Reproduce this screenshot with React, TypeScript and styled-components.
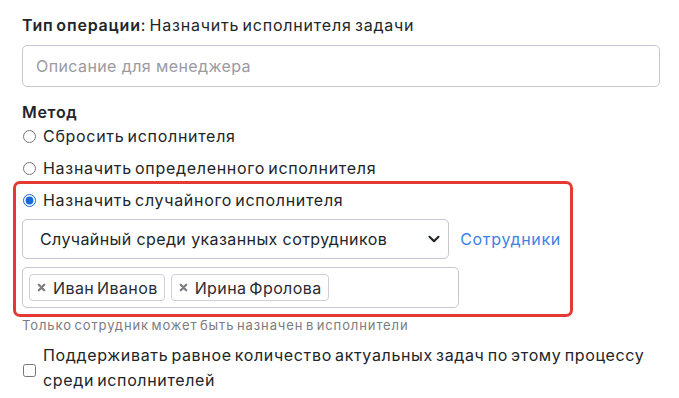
import React from "react";
import styled, { createGlobalStyle } from "styled-components";

const GlobalStyle = createGlobalStyle`
  body {
    margin: 0;
    background: #fff;
    font-family: Inter, "Noto Sans", sans-serif;
    color: #212529;
    letter-spacing: 0.7px;
    word-spacing: -2px;
  }
`;

const Page = styled.div`
  width: 679px;
  box-sizing: border-box;
  padding: 13px 19px 0 22px;
`;

const TypeLine = styled.div`
  font-size: 16px;
  line-height: 24px;
  letter-spacing: 0.8px;
  b {
    font-weight: 600;
  }
`;

const TextInput = styled.input`
  display: block;
  box-sizing: border-box;
  width: 100%;
  height: 42px;
  margin-top: 8px;
  padding: 0 13px;
  border: 1px solid #c6c6d2;
  border-radius: 5px;
  font: inherit;
  font-size: 16px;
  letter-spacing: 0.4px;
  color: #212529;
  &::placeholder {
    color: #9a9aa2;
  }
`;

const SectionTitle = styled.div`
  margin-top: 13px;
  font-size: 16px;
  line-height: 24px;
  font-weight: 600;
`;

const RadioRow = styled.label<{ $gap?: number }>`
  display: flex;
  align-items: center;
  gap: 7px;
  height: 24px;
  margin-top: ${(p) => p.$gap ?? 8}px;
  font-size: 16px;
  cursor: pointer;
  input {
    margin: 0 0 0 1px;
    width: 13px;
    height: 13px;
    accent-color: #1668dc;
  }
`;

const Highlight = styled.div`
  box-sizing: border-box;
  width: 560px;
  margin: 1px 0 0 -9px;
  padding: 4px 9px 6px 6px;
  border: 3px solid #e53a33;
  border-radius: 7px;
`;

const SelectLine = styled.div`
  display: flex;
  align-items: center;
  gap: 11px;
  margin-top: 7px;
`;

const SelectWrap = styled.div`
  position: relative;
  width: 428px;
`;

const Select = styled.select`
  display: block;
  box-sizing: border-box;
  width: 100%;
  height: 40px;
  padding: 0 36px 0 17px;
  appearance: none;
  background: #fff;
  border: 1px solid #c6c6d2;
  border-radius: 5px;
  font: inherit;
  font-size: 16px;
  letter-spacing: 0.4px;
  color: #212529;
`;

const Chevron = styled.svg`
  position: absolute;
  right: 9px;
  top: 14px;
  pointer-events: none;
`;

const Link = styled.a`
  color: #3b82e6;
  font-size: 16px;
  text-decoration: none;
`;

const TagBox = styled.div`
  box-sizing: border-box;
  display: flex;
  gap: 6px;
  width: 437px;
  height: 41px;
  margin-top: 8px;
  padding: 6px;
  border: 1px solid #c6c6d2;
  border-radius: 5px;
`;

const Tag = styled.span`
  display: inline-flex;
  align-items: center;
  gap: 7px;
  height: 27px;
  box-sizing: border-box;
  padding: 0 6px 0 7px;
  border: 1px solid #cfcfd6;
  border-radius: 4px;
  font-size: 16px;
  letter-spacing: 0.4px;
  color: #2b2b33;
`;

const Help = styled.div`
  font-size: 13px;
  line-height: 16px;
  letter-spacing: 0.9px;
  color: #7b7b82;
`;

const CheckRow = styled.label`
  display: flex;
  align-items: center;
  gap: 7px;
  margin-top: 10px;
  font-size: 16px;
  line-height: 25px;
  letter-spacing: 0.65px;
  input {
    flex: none;
    margin: 4px 0 0 1px;
    width: 13px;
    height: 13px;
  }
`;

const RemoveIcon = () => (
  <svg width="9" height="9" viewBox="0 0 10 10">
    <path d="M2 2l6 6M8 2l-6 6" stroke="#7d7d84" strokeWidth="2.5" strokeLinecap="round" />
  </svg>
);

export default function App() {
  return (
    <Page>
      <GlobalStyle />
      <TypeLine>
        <b>Тип операции</b>: Назначить исполнителя задачи
      </TypeLine>
      <TextInput placeholder="Описание для менеджера" />

      <SectionTitle>Метод</SectionTitle>
      <RadioRow $gap={0}>
        <input type="radio" name="method" />
        Сбросить исполнителя
      </RadioRow>
      <RadioRow>
        <input type="radio" name="method" />
        Назначить определенного исполнителя
      </RadioRow>

      <Highlight>
        <RadioRow $gap={0}>
          <input type="radio" name="method" defaultChecked />
          Назначить случайного исполнителя
        </RadioRow>
        <SelectLine>
          <SelectWrap>
            <Select defaultValue="listed">
              <option value="listed">Случайный среди указанных сотрудников</option>
            </Select>
            <Chevron width="12" height="12" viewBox="0 0 16 16">
              <path d="M2 5l6 6 6-6" fill="none" stroke="#212529" strokeWidth="2.8" strokeLinecap="round" strokeLinejoin="round" />
            </Chevron>
          </SelectWrap>
          <Link href="#">Сотрудники</Link>
        </SelectLine>
        <TagBox>
          <Tag>
            <RemoveIcon />
            Иван Иванов
          </Tag>
          <Tag>
            <RemoveIcon />
            Ирина Фролова
          </Tag>
        </TagBox>
      </Highlight>
      <Help>Только сотрудник может быть назначен в исполнители</Help>

      <CheckRow>
        <input type="checkbox" />
        <span>
          Поддерживать равное количество актуальных задач по этому процессу
          <br />
          среди исполнителей
        </span>
      </CheckRow>
    </Page>
  );
}
